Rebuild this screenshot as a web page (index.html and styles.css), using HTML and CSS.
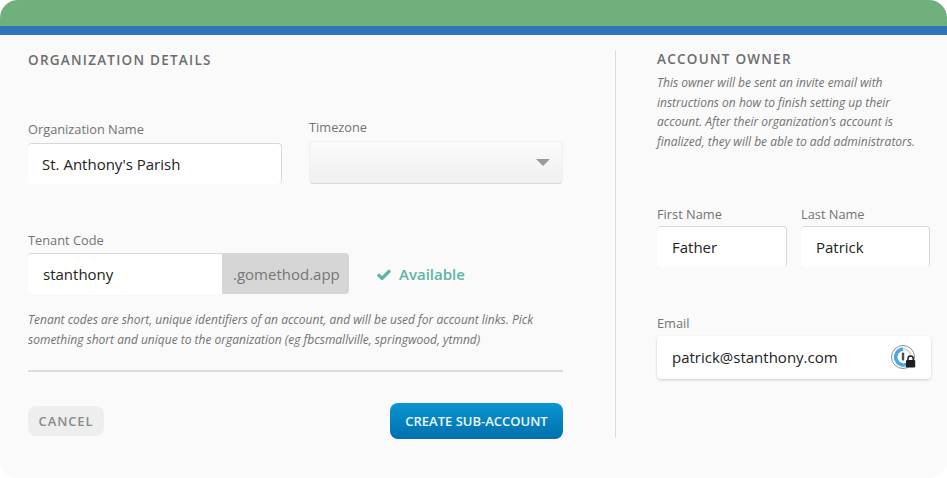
FILE: index.html
```html
<!DOCTYPE html>
<html lang="en">
<head>
    <meta charset="UTF-8">
    <meta name="viewport" content="width=device-width, initial-scale=1.0">
    <title>Create Sub-Account</title>
    <link rel="stylesheet" href="styles.css">
</head>
<body>
    <div class="card">
        <div class="band-green"></div>
        <div class="band-blue"></div>
        <div class="content">
            <div class="details">
                <h2 class="section-title">Organization Details</h2>
                <div class="row-org">
                    <div class="field field-org">
                        <label class="field-label">Organization Name</label>
                        <div class="input input-org">St. Anthony's Parish</div>
                    </div>
                    <div class="field field-org">
                        <label class="field-label">Timezone</label>
                        <div class="select"><span class="caret"></span></div>
                    </div>
                </div>
                <div class="tenant">
                    <label class="field-label">Tenant Code</label>
                    <div class="tenant-row">
                        <div class="input input-tenant">stanthony</div>
                        <div class="addon">.gomethod.app</div>
                        <div class="status">
                            <svg class="status-icon" viewBox="0 0 14 12" width="14" height="12">
                                <path d="M1 6.5 L5 10.5 L13 2.5" fill="none" stroke="#5bb5a6" stroke-width="3.2"/>
                            </svg>
                            <span>Available</span>
                        </div>
                    </div>
                    <p class="hint">Tenant codes are short, unique identifiers of an account, and will be used for account links. Pick something short and unique to the organization (eg fbcsmallville, springwood, ytmnd)</p>
                </div>
                <div class="actions">
                    <button class="btn btn-cancel">Cancel</button>
                    <button class="btn btn-create">Create Sub-Account</button>
                </div>
            </div>
            <div class="owner">
                <h2 class="section-title section-title-owner">Account Owner</h2>
                <p class="hint hint-owner">This owner will be sent an invite email with instructions on how to finish setting up their account. After their organization's account is finalized, they will be able to add administrators.</p>
                <div class="row-names">
                    <div class="field field-name">
                        <label class="field-label">First Name</label>
                        <div class="input input-name">Father</div>
                    </div>
                    <div class="field field-name">
                        <label class="field-label">Last Name</label>
                        <div class="input input-name">Patrick</div>
                    </div>
                </div>
                <div class="field field-email">
                    <label class="field-label">Email</label>
                    <div class="input input-email">
                        <span>patrick@stanthony.com</span>
                        <svg class="lock-icon" viewBox="0 0 26 26" width="26" height="26">
                            <circle cx="12" cy="12" r="11.5" fill="#fff" stroke="#7f909b" stroke-width="1"/>
                            <path d="M12 4 A8 8 0 1 0 18 18" fill="none" stroke="#4aa8e0" stroke-width="3.6"/>
                            <path d="M12 4 A8 8 0 0 1 20 11" fill="none" stroke="#d5dde2" stroke-width="2"/>
                            <rect x="10.8" y="7.5" width="2.4" height="8" rx="1" fill="#44525c"/>
                            <path d="M17 15 V13.5 A2.6 2.6 0 0 1 22.2 13.5 V15" fill="none" stroke="#1c1f22" stroke-width="1.5"/>
                            <rect x="15" y="15" width="9.2" height="7.5" rx="1" fill="#1c1f22"/>
                        </svg>
                    </div>
                </div>
            </div>
        </div>
    </div>
</body>
</html>
```

FILE: styles.css
```css
* {
    box-sizing: border-box;
}
html, body {
    margin: 0;
    padding: 0;
    background: #fff;
}
body {
    width: 947px;
    height: 478px;
    overflow: hidden;
    font-family: "Open Sans", "Noto Sans", sans-serif;
}
.card {
    width: 947px;
    height: 478px;
    background: #fafafa;
    border-radius: 18px;
    overflow: hidden;
}
.band-green {
    height: 26px;
    background: #6fb07c;
}
.band-blue {
    height: 9px;
    background: #2d74b8;
}
.content {
    display: flex;
    align-items: flex-start;
    padding: 15px 16px 0 28px;
}
.details {
    width: 535px;
    margin-right: 52px;
}
.owner {
    width: 316px;
    height: 388px;
    border-left: 1px solid #dcdcdc;
    padding-left: 41px;
}
.section-title {
    margin: 0;
    height: 20px;
    font-size: 13.5px;
    line-height: 20px;
    font-weight: 600;
    letter-spacing: 1.25px;
    text-transform: uppercase;
    color: #6d6d6d;
}
.row-org {
    display: flex;
    align-items: flex-end;
    justify-content: space-between;
    margin-top: 48px;
}
.field-org {
    width: 254px;
}
.field-label {
    display: block;
    font-size: 12.8px;
    line-height: 18px;
    color: #737373;
}
.input {
    display: flex;
    align-items: center;
    background: #fff;
    color: #222;
    font-size: 15px;
    font-weight: 500;
    height: 41px;
    border-radius: 4px;
    border-top: 1px solid #d8d8d8;
    border-right: 1px solid #d8d8d8;
}
.input-org {
    margin-top: 5px;
    padding-left: 14px;
}
.select {
    position: relative;
    height: 43px;
    margin-top: 5px;
    background: linear-gradient(#fafafa, #f0f0f0);
    border: 1px solid #efefef;
    border-bottom: 1px solid #dadada;
    border-radius: 4px;
}
.caret {
    position: absolute;
    right: 12px;
    top: 17px;
    border-left: 7px solid transparent;
    border-right: 7px solid transparent;
    border-top: 7px solid #9a9a9a;
}
.tenant {
    margin-top: 47px;
}
.tenant .field-label {
    margin-bottom: 4px;
}
.tenant-row {
    display: flex;
    align-items: center;
}
.input-tenant {
    width: 194px;
    padding-left: 15px;
    border-right: none;
    border-radius: 4px 0 0 4px;
}
.addon {
    width: 127px;
    height: 41px;
    display: flex;
    align-items: center;
    padding-left: 11px;
    background: #d6d6d6;
    color: #777;
    font-size: 15px;
    border-radius: 0 4px 4px 0;
}
.status {
    display: flex;
    align-items: center;
    margin-left: 28px;
    color: #5bb5a6;
    font-size: 15px;
    font-weight: 600;
}
.status-icon {
    margin-right: 8px;
}
.hint {
    margin: 16px 0 0;
    font-size: 12px;
    line-height: 20px;
    font-style: italic;
    color: #727272;
}
.actions {
    display: flex;
    align-items: center;
    justify-content: space-between;
    margin-top: 20px;
    padding-top: 31px;
    border-top: 2px solid #dcdcdc;
}
.btn {
    border: none;
    font-family: inherit;
    text-transform: uppercase;
}
.btn-cancel {
    width: 76px;
    height: 30px;
    background: #eeeeee;
    color: #8a8a8a;
    font-size: 13px;
    font-weight: 600;
    letter-spacing: 0.9px;
    border-radius: 8px;
}
.btn-create {
    width: 173px;
    height: 36px;
    background: linear-gradient(#0a96d2, #006fae);
    color: #eef8fc;
    font-size: 13px;
    font-weight: 600;
    border-radius: 8px;
}
.section-title-owner {
    margin-top: -1px;
    margin-bottom: 4px;
}
.hint-owner {
    margin: 0;
    line-height: 19.7px;
    width: 262px;
}
.row-names {
    display: flex;
    justify-content: space-between;
    width: 273px;
    margin-top: 53px;
}
.field-name {
    width: 130px;
}
.field-name:last-child {
    width: 129px;
}
.input-name {
    margin-top: 3px;
    padding-left: 15px;
}
.field-email {
    width: 274px;
    margin-top: 47px;
}
.input-email {
    justify-content: space-between;
    height: 43px;
    margin-top: 4px;
    padding: 0 14px 0 15px;
    border: none;
    box-shadow: 0 1px 3px rgba(0, 0, 0, 0.18);
}
.lock-icon {
    margin-top: 2px;
}
```
